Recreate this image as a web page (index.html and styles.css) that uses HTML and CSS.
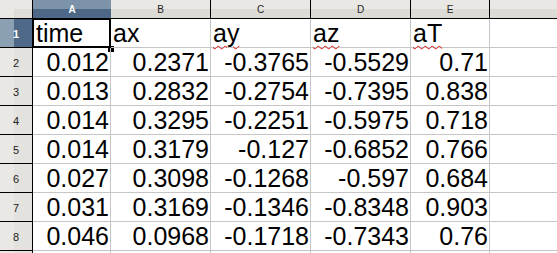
FILE: index.html
```html
<!DOCTYPE html>
<html>
<head>
<meta charset="utf-8">
<link rel="stylesheet" href="styles.css">
</head>
<body>
<div class="sheet">
  <div class="corner"></div>
  <div class="ch sel">A</div>
  <div class="ch">B</div>
  <div class="ch">C</div>
  <div class="ch">D</div>
  <div class="ch">E</div>
  <div class="ch last"></div>

  <div class="rh sel">1</div>
  <div class="c txt active">time<span class="handle"></span></div>
  <div class="c txt">ax</div>
  <div class="c txt"><span class="sp">ay</span></div>
  <div class="c txt"><span class="sp">az</span></div>
  <div class="c txt"><span class="sp">aT</span></div>
  <div class="c"></div>

  <div class="rh">2</div>
  <div class="c">0.012</div><div class="c">0.2371</div><div class="c">-0.3765</div><div class="c">-0.5529</div><div class="c">0.71</div><div class="c"></div>
  <div class="rh">3</div>
  <div class="c">0.013</div><div class="c">0.2832</div><div class="c">-0.2754</div><div class="c">-0.7395</div><div class="c">0.838</div><div class="c"></div>
  <div class="rh">4</div>
  <div class="c">0.014</div><div class="c">0.3295</div><div class="c">-0.2251</div><div class="c">-0.5975</div><div class="c">0.718</div><div class="c"></div>
  <div class="rh">5</div>
  <div class="c">0.014</div><div class="c">0.3179</div><div class="c">-0.127</div><div class="c">-0.6852</div><div class="c">0.766</div><div class="c"></div>
  <div class="rh">6</div>
  <div class="c">0.027</div><div class="c">0.3098</div><div class="c">-0.1268</div><div class="c">-0.597</div><div class="c">0.684</div><div class="c"></div>
  <div class="rh">7</div>
  <div class="c">0.031</div><div class="c">0.3169</div><div class="c">-0.1346</div><div class="c">-0.8348</div><div class="c">0.903</div><div class="c"></div>
  <div class="rh">8</div>
  <div class="c">0.046</div><div class="c">0.0968</div><div class="c">-0.1718</div><div class="c">-0.7343</div><div class="c">0.76</div><div class="c"></div>
  <div class="rh"></div>
  <div class="c"></div><div class="c"></div><div class="c"></div><div class="c"></div><div class="c"></div><div class="c"></div>
</div>
</body>
</html>
```
FILE: styles.css
```css
html, body {
  margin: 0;
  padding: 0;
  background: #ffffff;
  overflow: hidden;
}
.sheet {
  display: grid;
  grid-template-columns: 33px 78px 100px 100px 100px 79px 80px;
  grid-template-rows: 19px repeat(9, 29px);
  font-family: "Liberation Sans", Arial, sans-serif;
  width: 557px;
  height: 253px;
  overflow: hidden;
}
.corner {
  box-sizing: border-box;
  border-right: 1px solid #000;
  border-bottom: 1px solid #000;
  background:
    linear-gradient(#deddd8, #deddd8) right bottom / 18px 9px no-repeat,
    #e9e8e4;
}
.ch {
  box-sizing: border-box;
  border-right: 1px solid #000;
  border-bottom: 1px solid #000;
  background: linear-gradient(#e9e8e4 0, #e9e8e4 50%, #dcdbd6 50%, #dcdbd6 100%);
  font-size: 10px;
  color: #222;
  display: flex;
  align-items: center;
  justify-content: center;
  padding-top: 1px;
}
.ch.sel {
  background: linear-gradient(#7c93a9 0, #7c93a9 50%, #4d6987 50%, #4d6987 100%);
  color: #fff;
  font-weight: bold;
  border-right: none;
}
.ch.last {
  border-right: none;
}
.rh {
  box-sizing: border-box;
  border-right: 1px solid #000;
  border-bottom: 1px solid #000;
  background: linear-gradient(to right, #e9e8e4 0, #e9e8e4 45%, #e3e2de 45%, #e3e2de 100%);
  font-size: 11px;
  color: #222;
  display: flex;
  align-items: center;
  justify-content: center;
  padding-top: 2px;
}
.rh.sel {
  background: linear-gradient(to right, #8ca0b3 0, #8ca0b3 45%, #4d6987 45%, #4d6987 100%);
  color: #fff;
  font-weight: bold;
}
.c {
  box-sizing: border-box;
  border-right: 1px solid #c6c6c6;
  border-bottom: 1px solid #c6c6c6;
  font-size: 25px;
  line-height: 28px;
  color: #000;
  text-align: right;
  padding-right: 1px;
  white-space: nowrap;
  position: relative;
}
.c.txt {
  text-align: left;
  padding-left: 2px;
  padding-right: 0;
}
.c.active {
  border: 2px solid #000;
  margin-left: -1px;
  margin-top: -1px;
  padding-left: 2px;
  line-height: 27px;
  overflow: visible;
}
.handle {
  position: absolute;
  right: -5px;
  bottom: -6px;
  width: 6px;
  height: 6px;
  background: #000;
}
.sp {
  text-decoration: underline wavy #e01010;
  text-decoration-thickness: 1px;
  text-underline-offset: 3px;
}
```
